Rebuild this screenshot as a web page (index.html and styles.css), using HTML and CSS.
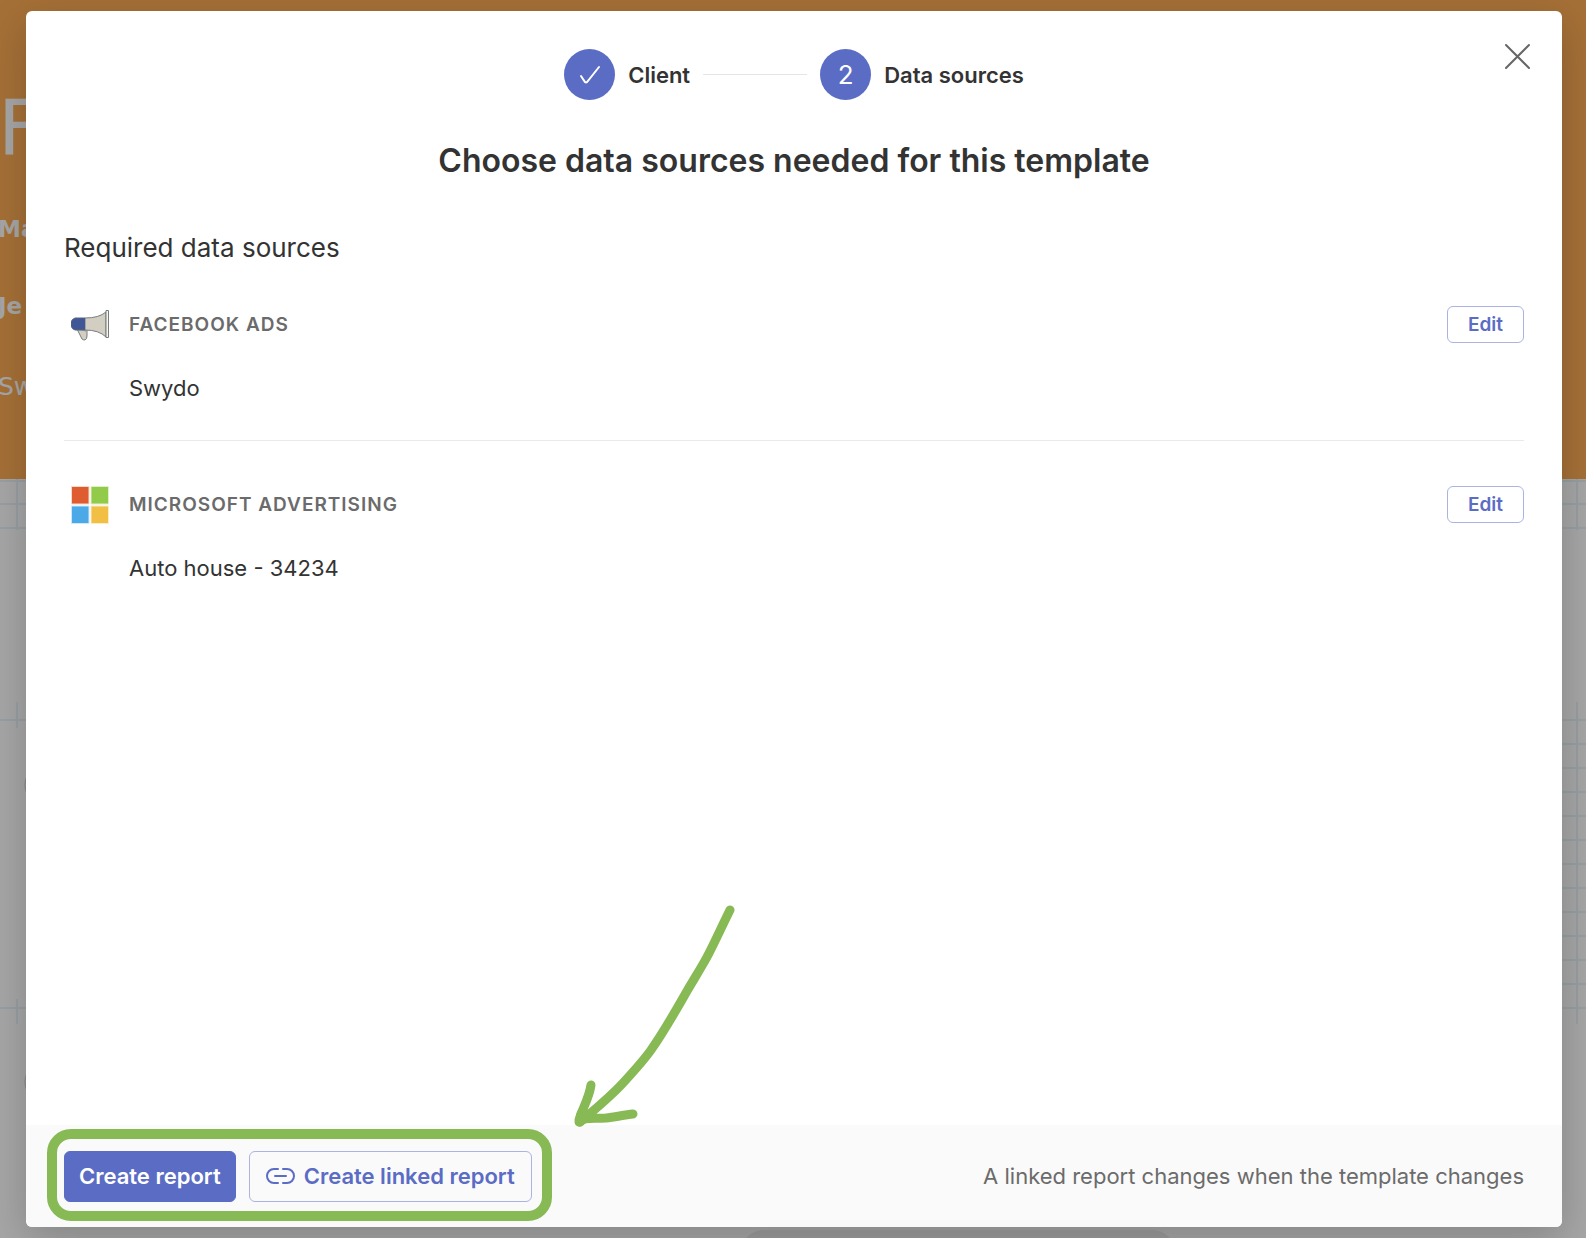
FILE: index.html
```html
<!DOCTYPE html>
<html lang="en">
<head>
    <meta charset="UTF-8">
    <meta name="viewport" content="width=device-width, initial-scale=1.0">
    <title>Choose data sources</title>
    <link rel="stylesheet" href="styles.css">
</head>
<body>
    <!-- Report page behind the modal -->
    <div class="report" aria-hidden="true">
        <div class="report-hero">
            <div class="report-title">F</div>
            <div class="report-label">Ma</div>
            <div class="report-label report-contact">Je</div>
            <div class="report-company">Sw</div>
        </div>
        <svg class="report-grid grid-left" width="30" height="720" viewBox="0 0 30 720">
            <path d="M0 2H30M0 25H30M0 49H30M17 0V51M0 241H30M17 223V249M0 529H30M17 520V545"/>
            <g class="grid-circles">
                <circle cx="47" cy="306" r="22"/>
                <circle cx="47" cy="603" r="22"/>
            </g>
        </svg>
        <svg class="report-grid grid-right" width="30" height="720" viewBox="0 0 30 720">
            <path d="M0 2H30M0 25H30M0 49H30M21 0V51M21 223V545M0 241H30M0 265H30M0 289H30M0 313H30M0 337H30M0 361H30M0 385H30M0 409H30M0 433H30M0 457H30M0 481H30M0 505H30M0 529H30"/>
        </svg>
        <div class="report-pill"></div>
    </div>

    <div class="overlay">
        <div class="modal" role="dialog" aria-modal="true" aria-labelledby="modal-title">
            <button class="close-btn" type="button" aria-label="Close">
                <svg width="26" height="26" viewBox="0 0 26 26">
                    <path d="M2 2L25 25M25 2L2 25"/>
                </svg>
            </button>

            <main class="modal-body">
                <ol class="steps">
                    <li class="step">
                        <span class="step-circle">
                            <svg width="22" height="20" viewBox="0 0 22 20">
                                <path d="M2 11L6 17Q7 18 8 17L20 2"/>
                            </svg>
                        </span>
                        <span>Client</span>
                    </li>
                    <li class="step-line" role="presentation"></li>
                    <li class="step">
                        <span class="step-circle">2</span>
                        <span>Data sources</span>
                    </li>
                </ol>

                <h1 id="modal-title">Choose data sources needed for this template</h1>
                <h2>Required data sources</h2>

                <section class="source">
                    <div class="source-header">
                        <svg class="source-icon" width="38" height="38" viewBox="0 0 38 38">
                            <path d="M6 23L11 33Q12 34 14 34Q16 33 16 30V24Z" fill="#d2cfc2" stroke="#777b80"/>
                            <path d="M7 24H16V27L13 25Z" fill="#a9a9a3"/>
                            <path d="M14 12Q28 12 35 6V31Q28 24 14 24Z" fill="#d2cfc2" stroke="#777b80"/>
                            <path d="M4 12H14V24H4Q1 23 0 20V16Q1 13 4 12Z" fill="#3f5796"/>
                            <path d="M14 12H4Q1 13 0 16V20Q1 23 4 24H14" fill="none" stroke="#56627f"/>
                            <path d="M35 4.500H37.500V31.500H35Z" fill="#f7f7e8" stroke="#777b80"/>
                        </svg>
                        <h3>FACEBOOK ADS</h3>
                        <button class="edit-btn" type="button">Edit</button>
                    </div>
                    <p>Swydo</p>
                </section>

                <section class="source">
                    <div class="source-header">
                        <svg class="source-icon" width="38" height="38" viewBox="0 0 38 38">
                            <path d="M.5 .5H18V18H.5Z" fill="#df5c30" stroke="#f7d8cd"/>
                            <path d="M20 .5H37.500V18H20Z" fill="#92cb49" stroke="#def0c8"/>
                            <path d="M.5 20H18V37.500H.5Z" fill="#4ba9e8" stroke="#cfe8f9"/>
                            <path d="M20 20H37.500V37.500H20Z" fill="#f1bf43" stroke="#fbebc7"/>
                        </svg>
                        <h3>MICROSOFT ADVERTISING</h3>
                        <button class="edit-btn" type="button">Edit</button>
                    </div>
                    <p>Auto house - 34234</p>
                </section>
            </main>

            <footer class="modal-footer">
                <div class="actions">
                    <button class="primary-btn" type="button">Create report</button>
                    <button class="secondary-btn" type="button">
                        <svg width="29" height="18" viewBox="0 0 29 18">
                            <path d="M12 2H8A7 7 0 0 0 8 16H12M17 2H21A7 7 0 0 1 21 16H17M9 9H20"/>
                        </svg>
                        Create linked report
                    </button>
                    <div class="highlight"></div>
                    <svg class="arrow" width="170" height="230" viewBox="0 0 170 230" aria-hidden="true">
                        <path d="M160 9C151 27 145 41 137 56C131 67 124 78 117 90C105 111 95 129 81 149C74 159 64 170 53 182C41 195 28 206 10 221"/>
                        <path d="M21 184C19 198 12 208 9 219M9 221C13 216 22 218 36 217C45 216 54 214 63 213"/>
                        <path d="M11 213L18 213L10 221Z"/>
                    </svg>
                </div>
                <p>A linked report changes when the template changes</p>
            </footer>
        </div>
    </div>
</body>
</html>
```
FILE: styles.css
```css
* {
    box-sizing: border-box;
}
body {
    margin: 0;
    font-family: Inter, "Liberation Sans", sans-serif;
    font-optical-sizing: none;
    color: #333;
}
h1, h2, h3, p, ol {
    margin: 0;
    padding: 0;
}
button {
    font-family: inherit;
    font-weight: 600;
    cursor: pointer;
}

/* Page behind the modal */
.report {
    position: fixed;
    inset: 0;
    overflow: hidden;
    background-color: #fff;
    font-family: "DejaVu Sans", sans-serif;
}
.report-hero {
    height: 479px;
    padding-top: 84px;
    margin-left: -2px;
    background-color: #fdac55;
    color: #fff;
}
.report-title {
    font-size: 77px;
    line-height: 90px;
    margin-bottom: 42px;
}
.report-label {
    font-size: 23px;
    line-height: 26px;
    font-weight: 700;
}
.report-contact {
    margin: 51px 0 53px;
}
.report-company {
    font-size: 25px;
    line-height: 30px;
}
.report-grid {
    position: absolute;
    top: 479px;
    fill: none;
    stroke: #e8f4fa;
    stroke-width: 2;
}
.grid-left {
    left: 0;
}
.grid-right {
    right: 0;
}
.grid-circles {
    stroke: #ccc;
    stroke-width: 1;
}
.report-pill {
    position: absolute;
    bottom: -40px;
    left: 740px;
    width: 436px;
    height: 48px;
    border-radius: 24px;
    background-color: #eee;
}

/* Modal */
.overlay {
    position: fixed;
    inset: 0;
    display: flex;
    padding: 11px 24px 11px 26px;
    background-color: rgba(0, 0, 0, 0.35);
}
.modal {
    position: relative;
    flex: 1;
    display: flex;
    flex-direction: column;
    background-color: #fff;
    border-radius: 6px;
    box-shadow: 0 12px 40px rgba(0, 0, 0, 0.2);
}
.close-btn {
    position: absolute;
    top: 32px;
    right: 32px;
    padding: 0;
    border: none;
    background: none;
    line-height: 0;
}
.close-btn path {
    stroke: #666;
    stroke-width: 2;
    stroke-linecap: round;
}
.modal-body {
    flex: 1;
    padding: 38px 38px 0;
}
.steps {
    display: flex;
    justify-content: center;
    align-items: center;
    gap: 13px;
    list-style: none;
}
.step {
    display: flex;
    align-items: center;
    gap: 13px;
    font-size: 22px;
    font-weight: 600;
}
.step-circle {
    display: flex;
    align-items: center;
    justify-content: center;
    width: 51px;
    height: 51px;
    border-radius: 50%;
    background-color: #5b6cc5;
    color: #fff;
    font-size: 26px;
    font-weight: 400;
}
.step-circle path {
    fill: none;
    stroke: #fff;
    stroke-width: 2;
    stroke-linecap: round;
}
.step-line {
    width: 104px;
    height: 1px;
    background-color: #e5e5e5;
}
h1 {
    margin-top: 41px;
    font-size: 32px;
    line-height: 40px;
    font-weight: 600;
    text-align: center;
}
h2 {
    margin-top: 51px;
    font-size: 26px;
    line-height: 32px;
    font-weight: 400;
}
.source {
    padding: 42px 0 37px;
}
.source + .source {
    border-top: 1px solid #eaeaea;
    padding-top: 45px;
}
.source-header {
    display: flex;
    align-items: center;
    height: 37px;
}
.source-icon {
    margin: 0 20px 0 7px;
}
h3 {
    flex: 1;
    font-size: 19px;
    font-weight: 600;
    letter-spacing: 1px;
    color: #6b6b6b;
}
.edit-btn {
    width: 77px;
    height: 37px;
    padding: 0;
    border: 1px solid #aab3e3;
    border-radius: 6px;
    background-color: #fff;
    color: #5b6cc5;
    font-size: 19px;
}
.source p {
    margin: 30px 0 0 65px;
    font-size: 22px;
    line-height: 30px;
}
.modal-footer {
    display: flex;
    align-items: center;
    justify-content: space-between;
    height: 102px;
    padding: 0 38px;
    background-color: #fafafa;
    border-radius: 0 0 6px 6px;
}
.modal-footer p {
    font-size: 22px;
    color: #6b6b6b;
}
.actions {
    position: relative;
    display: flex;
    gap: 13px;
}
.primary-btn, .secondary-btn {
    display: flex;
    align-items: center;
    justify-content: center;
    gap: 9px;
    height: 51px;
    padding: 0 14px;
    border: 1px solid #5b6cc5;
    border-radius: 6px;
    background-color: #5b6cc5;
    color: #fff;
    font-size: 22px;
}
.secondary-btn {
    padding: 0 16px;
    border-color: #aab3e3;
    background-color: #fafafa;
    color: #5b6cc5;
}
.secondary-btn path {
    fill: none;
    stroke: #5b6cc5;
    stroke-width: 2;
    stroke-linecap: round;
}

/* Green marker drawn around the buttons */
.highlight {
    position: absolute;
    inset: -22px -20px -19px -17px;
    border: 10px solid #87b955;
    border-radius: 24px;
    pointer-events: none;
}
.arrow {
    position: absolute;
    left: 506px;
    bottom: 71px;
    fill: none;
    stroke: #87b955;
    stroke-width: 9;
    stroke-linecap: round;
    stroke-linejoin: round;
    pointer-events: none;
}
```
